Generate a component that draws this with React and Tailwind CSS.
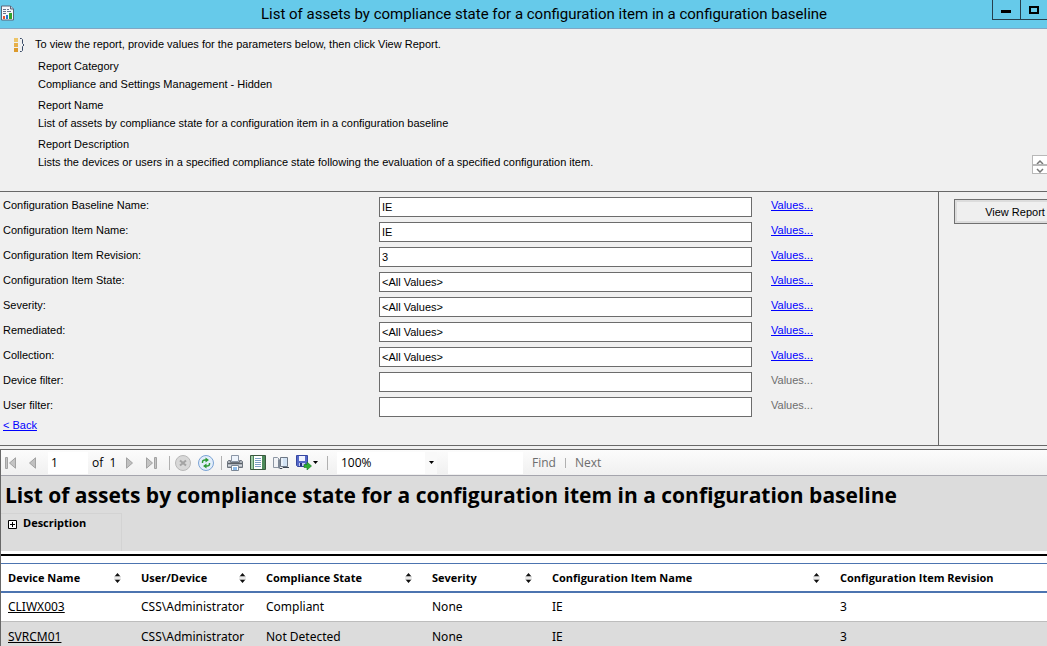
import { useState } from 'react';

const details = [
  { term: 'Report Category', text: 'Compliance and Settings Management - Hidden' },
  { term: 'Report Name', text: 'List of assets by compliance state for a configuration item in a configuration baseline' },
  {
    term: 'Report Description',
    text: 'Lists the devices or users in a specified compliance state following the evaluation of a specified configuration item.',
  },
];

const initialParams = [
  { id: 'baseline', label: 'Configuration Baseline Name:', value: 'IE', enabled: true },
  { id: 'item', label: 'Configuration Item Name:', value: 'IE', enabled: true },
  { id: 'revision', label: 'Configuration Item Revision:', value: '3', enabled: true },
  { id: 'state', label: 'Configuration Item State:', value: '<All Values>', enabled: true },
  { id: 'severity', label: 'Severity:', value: '<All Values>', enabled: true },
  { id: 'remediated', label: 'Remediated:', value: '<All Values>', enabled: true },
  { id: 'collection', label: 'Collection:', value: '<All Values>', enabled: true },
  { id: 'device', label: 'Device filter:', value: '', enabled: false },
  { id: 'user', label: 'User filter:', value: '', enabled: false },
];

const columns = [
  { label: 'Device Name', width: 'w-[133px]', sortable: true },
  { label: 'User/Device', width: 'w-[125px]', sortable: true },
  { label: 'Compliance State', width: 'w-[166px]', sortable: true },
  { label: 'Severity', width: 'w-[120px]', sortable: true },
  { label: 'Configuration Item Name', width: 'w-[288px]', sortable: true },
  { label: 'Configuration Item Revision', width: '', sortable: false },
];

const rows = [
  ['CLIWX003', 'CSS\\Administrator', 'Compliant', 'None', 'IE', '3'],
  ['SVRCM01', 'CSS\\Administrator', 'Not Detected', 'None', 'IE', '3'],
];

const ReportIcon = () => (
  <svg width="13" height="16" viewBox="0 0 13 16">
    <path d="M.5 1h9l3 3v11H.5z" fill="#f4f6fa" stroke="#596579" />
    <path d="M9.500 1v3h3" fill="#c6ccd8" stroke="#596579" />
    <path d="M2 4.500h3M6 4.500h2M2 6.500h3M6 6.500h4M2 8.500h3" stroke="#68758c" />
    <path d="M2 11h2v3H2z" fill="#e8502c" />
    <path d="M5 10h2v4H5z" fill="#2377cf" />
    <path d="M8 8h3v6H8z" fill="#30a32c" />
  </svg>
);

const ParamsIcon = () => (
  <svg width="11" height="14" viewBox="0 0 11 14">
    <path d="M0 0h4v4H0z" fill="#edc569" />
    <path d="M0 5h4v4H0z" fill="#e6b04a" />
    <path d="M0 10h4v4H0z" fill="#dc9a2c" />
    <path d="M6 .5h1.500l1 1v4l1.500 1.500-1.500 1.500v4l-1 1H6" fill="none" stroke="#3a4c68" />
  </svg>
);

const FirstIcon = () => (
  <svg width="11" height="12" viewBox="0 0 11 12">
    <path d="M.5.500h2v11h-2z" fill="#c4c4c4" stroke="#a2a2a2" />
    <path d="M10.500.800v10.400L4.500 6z" fill="#c4c4c4" stroke="#a2a2a2" />
  </svg>
);

const PrevIcon = () => (
  <svg width="7" height="12" viewBox="0 0 7 12">
    <path d="M6.500.800v10.400L.5 6z" fill="#c0c0c0" stroke="#a2a2a2" />
  </svg>
);

const StopIcon = () => (
  <svg width="16" height="16" viewBox="0 0 16 16">
    <circle cx="8" cy="8" r="7.500" fill="#d8d8d8" stroke="#b8b8b8" />
    <path d="M5 5.500l6 5M11 5.500l-6 5" stroke="#a3a3a3" strokeWidth="2" />
  </svg>
);

const RefreshIcon = () => (
  <svg width="16" height="16" viewBox="0 0 16 16">
    <circle cx="8" cy="8" r="7.500" fill="#e3eefb" stroke="#7ba3d4" />
    <path d="M4.500 8V7Q4.500 5 7 5h1M11.500 8v1Q11.500 11 9 11H8" fill="none" stroke="#2c9a35" strokeWidth="1.400" />
    <path d="M7.500 2.500l3.500 2.500-3.500 2.500zM8.500 8.500v5L5 11z" fill="#2c9a35" />
  </svg>
);

const PrintIcon = () => (
  <svg width="16" height="16" viewBox="0 0 16 16">
    <path d="M4.500.5h7v6h-7z" fill="#eef4fc" stroke="#8b96a6" />
    <path d="M.5 6.500l1-1h2v2h9v-2h2l1 1v6H.5z" fill="#aeb3ba" stroke="#6c737c" />
    <path d="M1 8.500h14" stroke="#595f67" />
    <path d="M1 10.500h14" stroke="#d7dbe0" />
    <path d="M4.500 10.500h7v5h-7z" fill="#fff" stroke="#7b8796" />
    <path d="M6 12h4v3H6z" fill="#8fbdec" />
  </svg>
);

const LayoutIcon = () => (
  <svg width="16" height="15" viewBox="0 0 16 15">
    <path d="M.5.5h15v14H.5z" fill="#4d8a5a" stroke="#39583f" />
    <path d="M1 1h2v13H1z" fill="#9fcba6" />
    <path d="M4 1h8v13H4z" fill="#fff" />
    <path d="M5 3.500h6M5 5.500h6M5 7.500h6M5 9.500h6M5 11.500h6" stroke="#7d9fc4" />
  </svg>
);

const PageSetupIcon = () => (
  <svg width="16" height="14" viewBox="0 0 16 14">
    <path d="M.5 1.500h4l2 2v8h-6z" fill="#f1f3f6" stroke="#8d96a3" />
    <path d="M5 3l2 1v9l-2-1z" fill="#7d8795" />
    <path d="M7.500 1.500h7v9h-7z" fill="#d3e3f4" stroke="#6d7785" />
    <path d="M7 12.500h2l1-1h6" fill="none" stroke="#3d4653" />
    <path d="M9 2v8" stroke="#fff" />
  </svg>
);

const SaveIcon = () => (
  <svg width="16" height="15" viewBox="0 0 16 15">
    <path d="M.5.500h11v11h-10l-1-1z" fill="#5468c8" stroke="#3646a0" />
    <path d="M3 1h6v5H3z" fill="#f0f3ff" />
    <path d="M3 8h6v3H3z" fill="#c5cdf2" />
    <path d="M4 8h2v3H4z" fill="#24307d" />
    <path d="M8 9.500h3V7l4.500 4-4.500 4v-2.500H8z" fill="#2fae35" stroke="#14791c" strokeWidth=".6" />
  </svg>
);

const CaretIcon = () => (
  <svg width="5" height="3" viewBox="0 0 5 3">
    <path d="M0 0h5L2.500 3z" fill="#000" />
  </svg>
);

const SortIcon = () => (
  <svg width="7" height="10" viewBox="0 0 7 10">
    <path d="M3.500 0L6.500 3.500h-6zM.5 6.500h6L3.500 10z" fill="#111" />
    <path d="M0 4h7M0 6h7" stroke="#d4d4d4" />
  </svg>
);

const Separator = () => <span className="h-[14px] w-px bg-[#b0b0b0]" />;

const TitleBar = () => (
  <header className="flex h-[29px] items-start border-b border-[#80a6c4] bg-[#66caea]">
    <div className="w-24 shrink-0 pt-[5px] pl-px">
      <ReportIcon />
    </div>
    <h1 className="flex-1 text-center font-[Roboto,sans-serif] text-[15px] leading-7 whitespace-nowrap">
      List of assets by compliance state for a configuration item in a configuration baseline
    </h1>
    <div className="flex h-5 shrink-0 border-b border-l border-[#263f4d]">
      <button aria-label="Minimize" className="flex w-[28px] items-center justify-center border-r border-[#263f4d] pr-[2px]">
        <svg width="10" height="3" className="mt-1">
          <path d="M0 0h10v3H0z" />
        </svg>
      </button>
      <button aria-label="Maximize" className="flex w-[26px] items-center justify-center">
        <svg width="10" height="8">
          <path d="M1 1h8v6H1z" fill="none" stroke="#000" strokeWidth="2" />
        </svg>
      </button>
    </div>
  </header>
);

const ReportInfo = () => (
  <section className="flex items-end justify-between border-b border-[#686868] pt-[7px] pb-[17px]">
    <div className="pb-1">
      <div className="flex gap-[10px] pl-[14px]">
        <div className="pt-[2px]">
          <ParamsIcon />
        </div>
        <p>To view the report, provide values for the parameters below, then click View Report.</p>
      </div>
      <dl className="flex flex-col gap-[5px] pt-[6px] pl-[38px]">
        {details.map((detail) => (
          <div key={detail.term} className="flex flex-col gap-[2px]">
            <dt>{detail.term}</dt>
            <dd>{detail.text}</dd>
          </div>
        ))}
      </dl>
    </div>
    <div className="flex w-[15px] shrink-0 flex-col">
      <button aria-label="Scroll up" className="flex h-[10px] items-end justify-center border border-r-0 border-[#b8b8b8] bg-white">
        <svg width="8" height="5">
          <path d="M1 5l3-3 3 3" fill="none" stroke="#777" strokeWidth="1.500" />
        </svg>
      </button>
      <button aria-label="Scroll down" className="flex h-[9px] items-end justify-center border border-r-0 border-[#b8b8b8] bg-white">
        <svg width="8" height="5">
          <path d="M1 1l3 3 3-3" fill="none" stroke="#777" strokeWidth="1.500" />
        </svg>
      </button>
    </div>
  </section>
);

const Parameters = () => {
  const [params, setParams] = useState(initialParams);

  const update = (id, value) =>
    setParams(params.map((param) => (param.id === id ? { ...param, value } : param)));

  return (
    <section className="flex border-b border-[#686868]">
      <form className="min-w-0 flex-1 pt-[5px] pb-3 pl-[3px]">
        <div className="flex flex-col gap-[5px]">
          {params.map((param) => (
            <div key={param.id} className="flex h-5 items-start">
              <label htmlFor={param.id} className="w-[376px] shrink-0">
                {param.label}
              </label>
              <input
                id={param.id}
                type="text"
                value={param.value}
                onChange={(e) => update(param.id, e.target.value)}
                className="h-5 min-w-0 flex-1 border border-[#6c6c6c] bg-white px-[2px] outline-none"
              />
              <div className="w-[186px] shrink-0 pl-[19px]">
                {param.enabled ? (
                  <a href="#" className="text-[#0000ff] underline">Values...</a>
                ) : (
                  <span className="text-[#6d6d6d]">Values...</span>
                )}
              </div>
            </div>
          ))}
        </div>
        <a href="#" className="block w-fit text-[#0000ff] underline">&lt; Back</a>
      </form>
      <aside className="w-[109px] shrink-0 overflow-hidden border-l border-[#686868] pt-[7px] pl-[15px]">
        <button className="h-[25px] w-[122px] border border-[#707070] bg-[#efefef] ring-2 ring-[#dcdcdc] ring-inset">
          View Report
        </button>
      </aside>
    </section>
  );
};

const Toolbar = () => (
  <div className="flex h-[26px] items-center border-b border-[#a5a5ad] bg-linear-to-b from-[#fcfcfc] to-[#f0f0f0] pl-1 font-['Open_Sans',sans-serif] text-[12px]">
    <button aria-label="First page"><FirstIcon /></button>
    <button aria-label="Previous page" className="ml-[13px]"><PrevIcon /></button>
    <input
      aria-label="Current page"
      defaultValue="1"
      className="ml-3 h-[22px] w-10 bg-white px-[3px] outline-none"
    />
    <span className="ml-1 w-[34px] whitespace-pre">of  1</span>
    <button aria-label="Next page" className="rotate-180"><PrevIcon /></button>
    <button aria-label="Last page" className="ml-[13px] rotate-180"><FirstIcon /></button>
    <div className="ml-3 flex items-center gap-[5px]">
      <Separator />
      <button aria-label="Stop"><StopIcon /></button>
      <button aria-label="Refresh" className="ml-[2px]"><RefreshIcon /></button>
    </div>
    <div className="ml-[7px] flex items-center gap-[5px]">
      <Separator />
      <button aria-label="Print"><PrintIcon /></button>
      <button aria-label="Print layout" className="ml-[2px]"><LayoutIcon /></button>
      <button aria-label="Page setup" className="ml-[2px]"><PageSetupIcon /></button>
      <button aria-label="Export" className="ml-[2px] flex items-center gap-px">
        <SaveIcon />
        <CaretIcon />
      </button>
    </div>
    <div className="ml-[9px] flex items-center gap-[9px]">
      <Separator />
      <div className="relative w-[100px]">
        <select aria-label="Zoom" className="h-[22px] w-full appearance-none bg-white pl-1 outline-none">
          <option>100%</option>
        </select>
        <span className="pointer-events-none absolute inset-y-0 right-0 flex w-3 items-center justify-center bg-[#f9f9f9]">
          <CaretIcon />
        </span>
      </div>
    </div>
    <input aria-label="Search text" className="ml-[11px] h-[22px] w-[75px] bg-white outline-none" />
    <div className="ml-[9px] flex items-center gap-[9px] text-[#6d6d6d]">
      <button>Find</button>
      <span className="h-[10px] w-px bg-[#b0b0b0]" />
      <button>Next</button>
    </div>
  </div>
);

const ReportTable = () => (
  <table className="w-full table-fixed border-collapse border-t border-[#4c74b0] font-['Noto_Sans',sans-serif] text-[12px]">
    <thead>
      <tr className="h-[28px] border-b-2 border-[#4c74b0]">
        {columns.map((column) => (
          <th key={column.label} className={`${column.width} p-0 pt-[2px] pr-[13px] pl-[7px] text-left font-['Open_Sans',sans-serif] text-[11px] font-bold whitespace-nowrap`}>
            <div className="flex items-center justify-between">
              {column.label}
              {column.sortable && (
                <button aria-label={`Sort by ${column.label}`}><SortIcon /></button>
              )}
            </div>
          </th>
        ))}
      </tr>
    </thead>
    <tbody>
      {rows.map((row) => (
        <tr key={row[0]} className="h-[30px] border-b border-[#bdbdbd] odd:bg-white even:bg-[#dcdcdc]">
          {row.map((cell, i) => (
            <td key={i} className="p-0 pl-[7px] whitespace-nowrap">
              {i === 0 ? <a href="#" className="underline">{cell}</a> : cell}
            </td>
          ))}
        </tr>
      ))}
    </tbody>
  </table>
);

const App = () => {
  return (
    <div className="h-screen overflow-hidden bg-[#f0f0f0] font-['Liberation_Sans',sans-serif] text-[11px] leading-4 text-black">
      <TitleBar />
      <ReportInfo />
      <Parameters />
      <main className="mt-[3px] border-t border-l border-[#686868] bg-white">
        <Toolbar />
        <div className="border-b-2 border-black pb-[3px]">
          <div className="bg-[#dcdcdc]">
            <h2 className="pt-[3px] pb-px pl-1 font-['Open_Sans',sans-serif] text-[21px] leading-[33px] font-bold whitespace-nowrap">
              List of assets by compliance state for a configuration item in a configuration baseline
            </h2>
            <div className="flex h-[38px] w-[121px] items-start border-t border-r border-[#d3d3d3] pl-[7px]">
              <button className="flex items-center gap-[6px] font-['Open_Sans',sans-serif] text-[11px] leading-[18px] font-bold">
                <svg width="9" height="9" className="mt-[2px]">
                  <path d="M.5.500h8v8h-8z" fill="#fff" stroke="#000" />
                  <path d="M2 4.500h5M4.500 2v5" stroke="#000" />
                </svg>
                Description
              </button>
            </div>
          </div>
        </div>
        <div className="pt-[7px]">
          <ReportTable />
        </div>
      </main>
    </div>
  );
};

export default App;
